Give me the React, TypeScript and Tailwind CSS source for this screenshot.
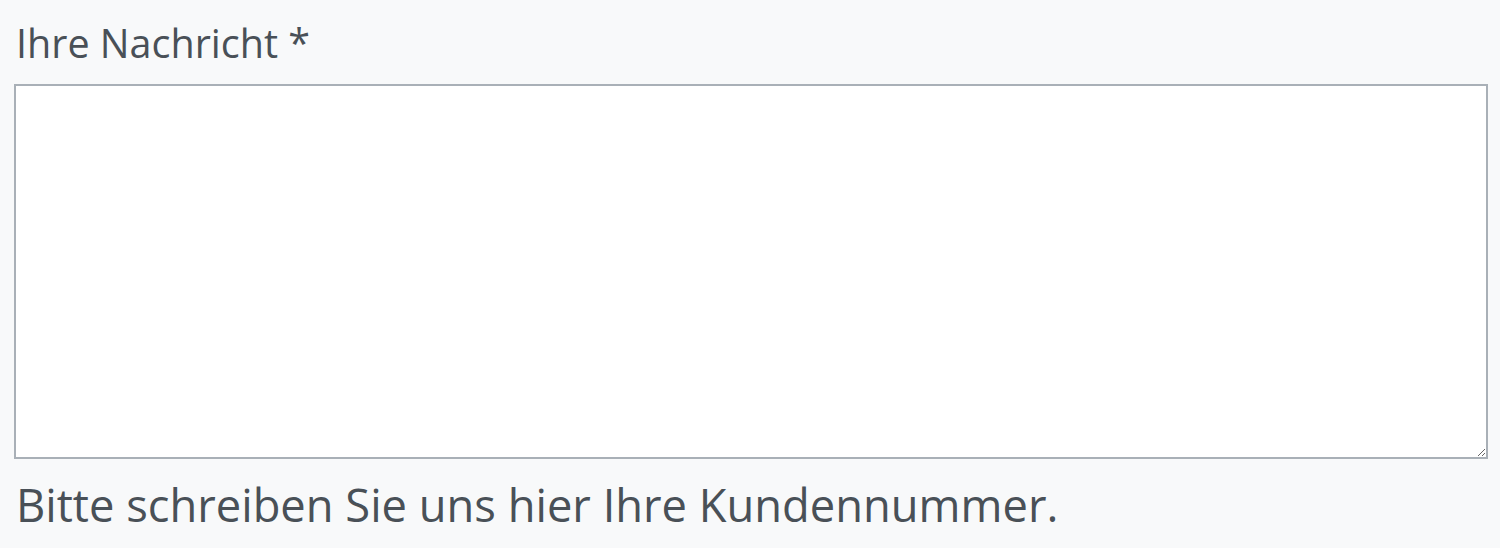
export default function App() {
  return (
    <div className="w-[1500px] h-[548px] bg-[#f8f9fa] overflow-hidden" style={{ fontFamily: '"Open Sans", sans-serif' }}>
      <div className="pl-[14px] pt-[16px]">
        <label className="block text-[39.5px] leading-[54px] text-[#495057] pl-[2px]">Ihre Nachricht *</label>
        <textarea className="block mt-[14px] w-[1474px] h-[375px] bg-white border-2 border-[#a9b0b7] outline-none resize-y" />
        <div className="mt-[16px] pl-[2px] text-[45.3px] leading-[60px] text-[#495057]">Bitte schreiben Sie uns hier Ihre Kundennummer.</div>
      </div>
    </div>
  );
}
